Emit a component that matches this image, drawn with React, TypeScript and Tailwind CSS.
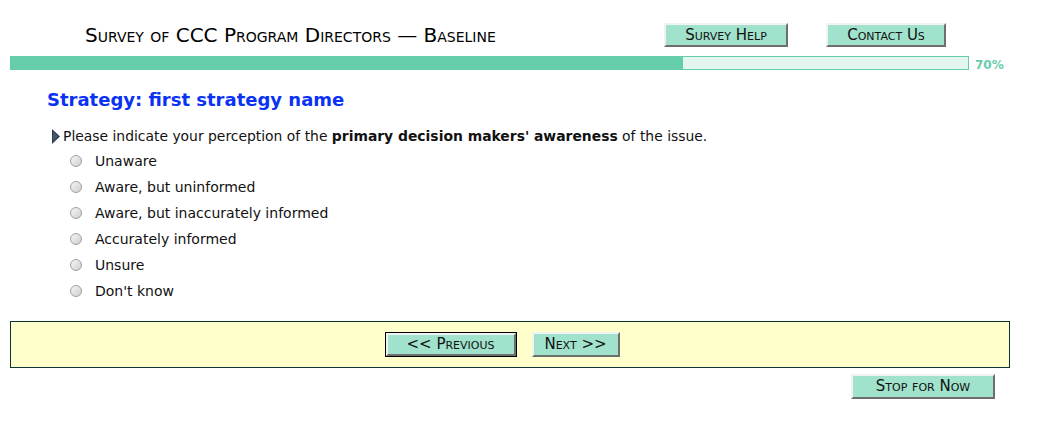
const font = { fontFamily: '"DejaVu Sans", Verdana, sans-serif' };

const options = [
  "Unaware",
  "Aware, but uninformed",
  "Aware, but inaccurately informed",
  "Accurately informed",
  "Unsure",
  "Don't know",
];

const btn =
  "flex items-center justify-center bg-[#a0e2cc] text-[15px] text-[#111] [font-variant:small-caps] border-2 border-t-[#f2f2f2] border-l-[#f2f2f2] border-b-[#6e6e6e] border-r-[#6e6e6e]";

const Radio = () => (
  <span className="block w-[12px] h-[12px] rounded-full border border-[#a0a0a0] bg-gradient-to-br from-[#f6f6f6] to-[#cfcfcf]" />
);

export default function App() {
  return (
    <div className="w-[1037px] h-[424px] bg-white text-[#111]" style={font}>
      {/* header */}
      <div className="flex items-start pt-[23px] h-[56px]">
        <div className="w-[664px] pl-[85px] text-[20px] leading-[24px] [font-variant:small-caps] text-black">
          Survey of CCC Program Directors — Baseline
        </div>
        <div className={`${btn} w-[124px] h-[24px]`}>Survey Help</div>
        <div className={`${btn} w-[120px] h-[24px] ml-[38px]`}>Contact Us</div>
      </div>

      {/* progress */}
      <div className="flex items-center pl-[10px] h-[14px]">
        <div className="flex w-[959px] h-[14px]">
          <div className="w-[672px] h-full bg-[#66cdaa]" />
          <div className="flex-1 h-full bg-[#e2f5ee] border border-[#66cdaa]" />
        </div>
        <span className="ml-[6px] mt-[4px] text-[12px] font-bold text-[#66cdaa]">70%</span>
      </div>

      {/* heading */}
      <h1 className="pl-[47px] pt-[18px] text-[18px] leading-[24px] font-bold text-[#0a32f5]">
        Strategy: first strategy name
      </h1>

      {/* question */}
      <div className="flex items-center pl-[52px] mt-[15px] h-[18px] text-[13.9px]">
        <svg width="9" height="15" viewBox="0 0 9 15" className="mr-[2px]">
          <polygon points="0,0 8,7.5 0,15" fill="#2e3a4e" />
          <polygon points="1,2.5 6,7.5 1,12.5" fill="#46566e" />
        </svg>
        <span>
          Please indicate your perception of the{" "}
          <b>primary decision makers' awareness</b> of the issue.
        </span>
      </div>

      <div className="flex flex-col pl-[70px] mt-[3px]">
        {options.map((o) => (
          <label key={o} className="flex items-center h-[26px] leading-[18px] text-[14px]">
            <Radio />
            <span className="ml-[13px]">{o}</span>
          </label>
        ))}
      </div>

      {/* nav box */}
      <div className="ml-[10px] mt-[17px] w-[1000px] h-[47px] bg-[#ffffcc] border border-[#0c3333] flex items-center justify-center">
        <div className="flex items-center ml-[-16px]">
          <div className="border border-black">
            <div className={`${btn} w-[130px] h-[23px]`}>&lt;&lt; Previous</div>
          </div>
          <div className={`${btn} w-[88px] h-[25px] ml-[15px]`}>Next &gt;&gt;</div>
        </div>
      </div>

      <div className="flex justify-end pr-[42px] mt-[6px]">
        <div className={`${btn} w-[144px] h-[25px]`}>Stop for Now</div>
      </div>
    </div>
  );
}
